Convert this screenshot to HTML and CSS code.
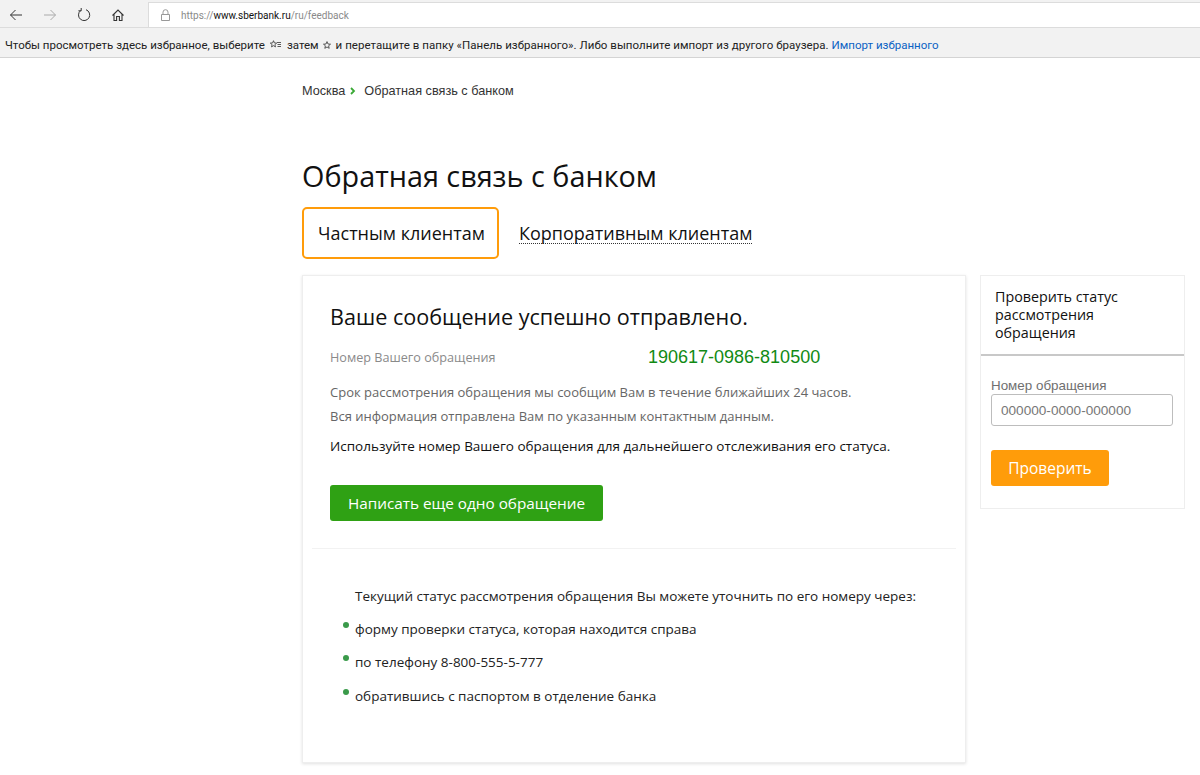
FILE: index.html
```html
<!DOCTYPE html>
<html lang="ru">
<head>
<meta charset="utf-8">
<title>Обратная связь с банком</title>
<link rel="stylesheet" href="styles.css">
</head>
<body>
<header class="chrome">
  <div class="toolbar">
    <div class="nav">
      <svg class="ico" viewBox="0 0 16 16"><path d="M14 8H2.500M7.500 3L2.500 8l5 5" fill="none" stroke="#333" stroke-width="1"/></svg>
      <svg class="ico" viewBox="0 0 16 16"><path d="M2 8h11.500M8.500 3l5 5-5 5" fill="none" stroke="#aaa" stroke-width="1"/></svg>
      <svg class="ico" viewBox="0 0 16 16"><path d="M4.600 3.600A5.600 5.600 0 1 0 10 2.700M5.200 1V3.800H2.400" fill="none" stroke="#333" stroke-width="1"/></svg>
      <svg class="ico" viewBox="0 0 16 16"><path d="M2.500 8.500L8 3l5.500 5.500M4 7v6.500h2.600V9.500h2.800v4H12V7" fill="none" stroke="#333" stroke-width="1.100"/></svg>
    </div>
    <div class="address">
      <svg class="lock" viewBox="0 0 9 12"><path d="M2 5V3.200a2.500 2.500 0 0 1 5 0V5M.5 5.500h8v6h-8z" fill="none" stroke="#999" stroke-width="1"/></svg>
      <span class="url">https://<b class="host">www.sberbank.ru</b>/ru/feedback</span>
    </div>
  </div>
  <div class="favbar">
    <span>Чтобы просмотреть здесь избранное, выберите</span>
    <svg class="fav-list" viewBox="0 0 11 9"><path d="M3.500.7l.9 2.200 2.300.2-1.800 1.500.6 2.300-2-1.200-2 1.200.6-2.300L.3 3.100l2.300-.2zM7 2.500h4M7.500 4.500h3.500M7.500 6.500h3.500" fill="none" stroke="#333" stroke-width=".8"/></svg>
    <span>затем</span>
    <svg class="fav-star" viewBox="0 0 8 8"><path d="M4 .6l1 2.400 2.500.2-1.900 1.600.6 2.500L4 6l-2.200 1.300.6-2.500L.5 3.200 3 3z" fill="none" stroke="#333" stroke-width=".8"/></svg>
    <span class="fav-long">и перетащите в папку «Панель избранного». Либо выполните импорт из другого браузера.</span>
    <a class="fav-link">Импорт избранного</a>
  </div>
</header>

<div class="page">
  <nav class="crumbs">
    <span>Москва</span>
    <svg class="crumb-arrow" viewBox="0 0 6 8"><path d="M1 1l3 3-3 3" fill="none" stroke="#3aa935" stroke-width="1.800"/></svg>
    <span>Обратная связь с банком</span>
  </nav>
  <h1 class="title">Обратная связь с банком</h1>
  <div class="tabs">
    <div class="tab active">Частным клиентам</div>
    <div class="tab link"><span>Корпоративным клиентам</span></div>
  </div>
  <div class="columns">
    <main class="card">
      <section class="result">
        <h2 class="result-title">Ваше сообщение успешно отправлено.</h2>
        <div class="number-row">
          <span class="number-label">Номер Вашего обращения</span>
          <span class="number">190617-0986-810500</span>
        </div>
        <p class="note first">Срок рассмотрения обращения мы сообщим Вам в течение ближайших 24 часов.</p>
        <p class="note">Вся информация отправлена Вам по указанным контактным данным.</p>
        <p class="note dark">Используйте номер Вашего обращения для дальнейшего отслеживания его статуса.</p>
        <button class="btn green">Написать еще одно обращение</button>
      </section>
      <hr class="sep">
      <section class="info">
        <p class="info-lead">Текущий статус рассмотрения обращения Вы можете уточнить по его номеру через:</p>
        <ul class="info-list">
          <li>форму проверки статуса, которая находится справа</li>
          <li>по телефону 8-800-555-5-777</li>
          <li>обратившись с паспортом в отделение банка</li>
        </ul>
      </section>
    </main>
    <aside class="side">
      <div class="side-head">Проверить статус рассмотрения обращения</div>
      <div class="side-body">
        <label class="side-label" for="num">Номер обращения</label>
        <input class="side-input" id="num" placeholder="000000-0000-000000">
        <button class="btn orange">Проверить</button>
      </div>
    </aside>
  </div>
</div>
</body>
</html>
```
FILE: styles.css
```css
* { box-sizing: border-box; }
html, body { margin: 0; height: 775px; overflow: hidden; background: #fff; }
body { font-family: "Open Sans", sans-serif; color: #111; }

.chrome { height: 58px; background: #f2f2f2; border-bottom: 1px solid #d4d4d4; font-family: "Roboto", "Open Sans", sans-serif; }
.toolbar { height: 28px; display: flex; align-items: flex-end; padding-left: 8px; border-bottom: 1px solid #dcdcdc; }
.nav { display: flex; gap: 18px; width: 140px; align-self: center; margin-top: 3px; }
.ico { width: 16px; height: 16px; display: block; }
.address { flex: 1; height: 25px; background: #fff; border-left: 1px solid #dcdcdc; border-top: 1px solid #dcdcdc; display: flex; align-items: center; padding-left: 12px; font-size: 10px; color: #8a8a8a; }
.lock { width: 9px; height: 12px; margin-right: 11px; }
.host { font-weight: 400; color: #111; }
.favbar { height: 29px; display: flex; align-items: center; padding: 4px 0 0 5px; font-size: 11.5px; color: #222; white-space: nowrap; }
.fav-list { width: 11px; height: 9px; margin: 0 6px 0 5px; }
.fav-star { width: 8px; height: 8px; margin: 0 5px 0 4px; }
.fav-long { letter-spacing: .04px; }
.fav-link { color: #0b62c4; margin-left: 3px; }

.page { width: 898px; margin-left: 302px; }
.crumbs { height: 18px; margin-top: 24px; display: flex; align-items: center; font-family: "Liberation Sans", sans-serif; font-size: 12.7px; color: #333; }
.crumb-arrow { width: 6px; height: 8px; margin: 0 8px 0 5px; }
.title { margin: 53px 0 0; height: 46px; font-size: 28.8px; line-height: 46px; font-weight: 400; color: #111; }
.tabs { display: flex; align-items: center; margin-top: 8px; height: 52px; }
.tab { font-size: 18px; color: #111; }
.tab.active { width: 197px; height: 52px; padding-left: 2px; border: 2px solid #ff9c0a; border-radius: 5px; display: flex; align-items: center; justify-content: center; }
.tab.link { margin-left: 20px; }
.tab.link span { border-bottom: 1px dotted #333; line-height: 20px; display: block; }

.columns { display: flex; align-items: flex-start; margin-top: 16px; }
.card { width: 664px; height: 488px; border: 1px solid #eee; box-shadow: 0 1px 3px rgba(0,0,0,.12); padding-top: 1px; }
.result { padding: 24px 27px 0; }
.result-title { margin: 0; font-size: 21.6px; line-height: 32px; font-weight: 400; color: #111; }
.number-row { display: flex; align-items: center; margin-top: 11px; height: 26px; }
.number-label { width: 318px; font-size: 12.65px; color: #8a8a8a; }
.number { font-family: "Liberation Sans", sans-serif; font-size: 18px; color: #118a14; }
.note { margin: 0; font-size: 13px; line-height: 24px; color: #666; }
.note.first { margin-top: 10px; }
.note.dark { font-size: 13.5px; color: #111; margin-top: 6px; }
.btn { border: 0; border-radius: 3px; color: #fff; font-family: "Open Sans", sans-serif; display: block; height: 36px; padding: 0; }
.btn.green { width: 273px; margin-top: 27px; background: #2fa114; font-size: 15.3px; }
.sep { margin: 27px 9px 0; border: 0; border-top: 1px solid #f2f2f2; }
.info { padding: 37px 0 0 52px; font-size: 13.5px; color: #222; }
.info-lead { margin: 0; line-height: 20px; }
.info-list { list-style: none; margin: 0; padding: 0; }
.info-list li { position: relative; margin-top: 13.2px; line-height: 20px; }
.info-list li::before { content: ""; position: absolute; left: -12px; top: 3px; width: 6px; height: 6px; border-radius: 50%; background: #3a9a4a; }

.side { width: 205px; height: 234px; margin-left: 14px; border: 1px solid #eee; }
.side-head { height: 80px; padding: 12px 14px 0; font-size: 14.3px; line-height: 18px; color: #111; border-bottom: 2px solid #c8c8c8; }
.side-body { padding: 22px 10px 0; }
.side-label { display: block; font-family: "Liberation Sans", sans-serif; font-size: 13.4px; line-height: 16px; color: #6f6f6f; }
.side-input { display: block; width: 182px; height: 32px; border: 1px solid #bdbdbd; border-radius: 3px; padding: 0 9px; font-family: "Liberation Sans", sans-serif; font-size: 13.6px; background: #fff; }
.side-input::placeholder { color: #777; opacity: 1; }
.btn.orange { width: 118px; margin-top: 24px; background: #ff9c0a; font-size: 15.5px; }
```
